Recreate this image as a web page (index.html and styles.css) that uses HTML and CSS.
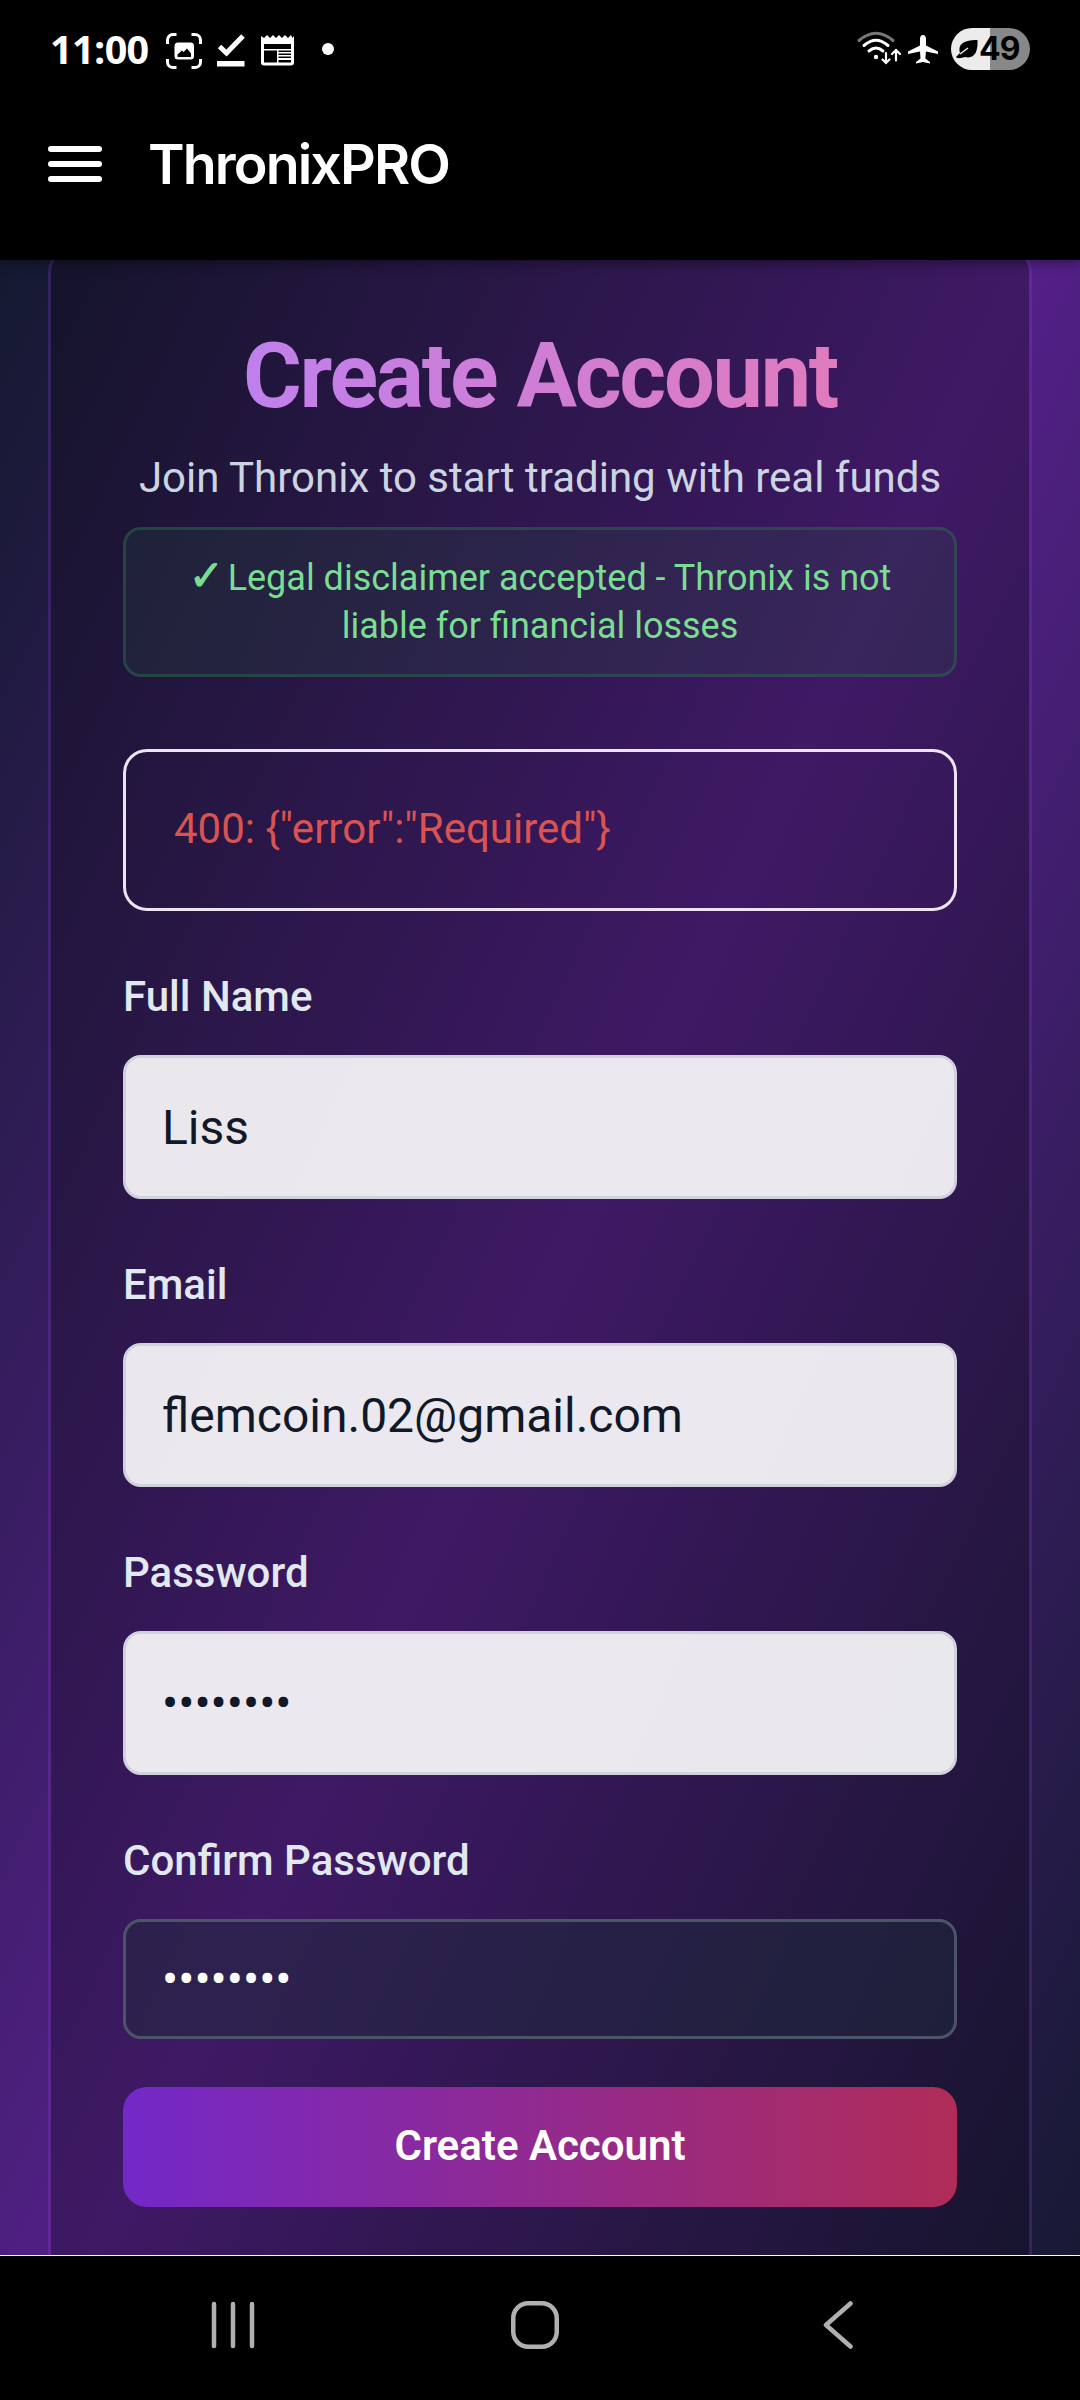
FILE: index.html
```html
<!DOCTYPE html>
<html lang="en">
<head>
<meta charset="utf-8">
<title>ThronixPRO</title>
<link rel="stylesheet" href="styles.css">
</head>
<body>
<div class="screen">
  <header class="top">
    <div class="status">
      <div class="status-left">
        <span class="clock">11:00</span>
        <svg class="st-shot" width="36" height="36" viewBox="0 0 36 36"><g fill="none" stroke="#fff" stroke-width="3"><path d="M1.500 11V7a5.500 5.500 0 0 1 5.500-5.500H10.500M25.500 1.500H29A5.500 5.500 0 0 1 34.500 7v4M34.500 26v3a5.500 5.500 0 0 1-5.500 5.500H25.500M10.500 34.500H7A5.500 5.500 0 0 1 1.500 29V26"/></g><path fill="#fff" fill-rule="evenodd" d="M12 9.500h12.500a3.500 3.500 0 0 1 3.500 3.500v10a3.500 3.500 0 0 1-3.500 3.500H12A3.500 3.500 0 0 1 8.500 23V13A3.500 3.500 0 0 1 12 9.500zM11.500 24h13.500v-3.500l-4-5-3.500 3.500-1.500-1.500-4.500 4z"/></svg>
        <svg class="st-check" width="28" height="34" viewBox="0 0 28 34"><path d="M2.500 13.500L9.500 20 26 3" fill="none" stroke="#fff" stroke-width="5"/><path d="M0 28h27.500v5.500H0z" fill="#fff"/></svg>
        <svg class="st-news" width="33" height="31" viewBox="0 0 33 31"><path fill="#fff" fill-rule="evenodd" d="M0 1l3 2 3-3 3 3 3-3 3 3 3-3 3 3 3-3 3 3 3-3 1.500 3L33 1v26.500a3 3 0 0 1-3 3H3a3 3 0 0 1-3-3zM3 9v5h27V9zM3 15.500v12h13v-12zM17.500 15.500v1.500H30v-1.500zM17.500 18.500V20H30v-1.500zM17.500 21.500V23H30v-1.500zM17.500 25v2.500H30V25z"/></svg>
        <span class="st-dot"></span>
      </div>
      <div class="status-right">
        <svg class="st-wifi" width="45" height="36" viewBox="0 0 45 36"><g fill="none" stroke="#fff" stroke-linecap="round"><path d="M2 9.500Q19 -5 36 9.500" stroke="#777" stroke-width="3"/><path d="M7 14.500Q19 4 31 14.500M12 20Q19 14 26 20" stroke-width="3"/><path d="M29 22v9.500M25.500 28.500l3.500 3.500 3.500-3.500M39 29.500v-10M35 23l4-4 4 4" stroke-width="2.200"/></g><circle cx="19" cy="26" r="2.200" fill="#fff"/></svg>
        <svg class="st-plane" width="30" height="29" viewBox="0 0 30 29"><path fill="#fff" d="M15 0c2 0 3 2 3 4v6.500l12 6V19l-12-2.500-.7 7L22 27v1.500L15 27l-7 1.500V27l4.500-3.500-.5-7L0 19v-2.500l12-6V4c0-2 1-4 3-4z"/></svg>
        <div class="battery">
          <svg width="22" height="20" viewBox="0 0 22 20"><path d="M4 14C2 6 6 1 21.500 1 22 14 18 20 9 18 5 19 2 20 0 18z"/><path d="M4 15l8-6" stroke="#ececec" stroke-width="1.500"/></svg>
          <span>49</span>
        </div>
      </div>
    </div>
    <div class="appbar">
      <div class="burger"><i></i><i></i><i></i></div>
      <div class="brand">ThronixPRO</div>
    </div>
  </header>
  <main class="view">
    <div class="backdrop">
      <section class="card">
        <div class="head">
          <h1>Create Account</h1>
          <p class="sub">Join Thronix to start trading with real funds</p>
          <div class="legal"><span class="tick">✓</span>Legal disclaimer accepted - Thronix is not liable for financial losses</div>
        </div>
        <form class="form">
          <div class="alert">400: {"error":"Required"}</div>
          <div class="field"><div class="label-row"><label>Full Name</label></div><div class="box light">Liss</div></div>
          <div class="field"><div class="label-row"><label>Email</label></div><div class="box light">flemcoin.02@gmail.com</div></div>
          <div class="field"><div class="label-row"><label>Password</label></div><div class="box light">••••••••</div></div>
          <div class="field"><div class="label-row"><label>Confirm Password</label></div><div class="box dark">••••••••</div></div>
          <button class="submit" type="button">Create Account</button>
        </form>
      </section>
    </div>
  </main>
  <nav class="nav">
    <svg class="nav-recents" width="44" height="48" viewBox="0 0 44 48"><path d="M3 3v42M22 3v42M41 3v42" stroke="#b0b0b0" stroke-width="4.500" stroke-linecap="round"/></svg>
    <svg class="nav-home" width="48" height="48" viewBox="0 0 48 48"><rect x="2.250" y="2.250" width="43.500" height="43.500" rx="15" fill="none" stroke="#b0b0b0" stroke-width="4.500"/></svg>
    <svg class="nav-back" width="30" height="48" viewBox="0 0 30 48"><path d="M27.500 2.500L3 24 27.500 45.500" fill="none" stroke="#b0b0b0" stroke-width="4.500" stroke-linecap="round" stroke-linejoin="round"/></svg>
  </nav>
</div>
</body>
</html>
```
FILE: styles.css
```css
* { box-sizing: border-box; }
body { margin: 0; background: #000; font-family: Roboto, sans-serif; }
.screen { width: 1080px; height: 2400px; display: flex; flex-direction: column; overflow: hidden; }

.top { height: 260px; flex: none; background: #000; color: #fff; box-shadow: 0 2px 12px rgba(0,0,0,.45); z-index: 1; }
.status { height: 98px; display: flex; justify-content: space-between; padding: 0 50px 0 50px; }
.status-left, .status-right { display: flex; align-items: center; }
.clock { width: 98px; font: 700 39.500px/96px "Open Sans", sans-serif; letter-spacing: -.6px; white-space: nowrap; }
.st-shot { margin: 3px 0 0 18px; }
.st-check { margin: 2px 0 0 15px; }
.st-news { margin: 3px 0 0 16px; }
.st-dot { width: 12px; height: 12px; border-radius: 50%; background: #fff; margin: 0 0 0 28px; }
.st-wifi { margin-right: 6px; }
.st-plane { margin-right: 13px; }
.battery { width: 79px; height: 42px; border-radius: 21px; background: linear-gradient(90deg, #ececec 39px, #888 39px); color: #000; display: flex; align-items: center; padding-left: 5px; font: 700 32px/42px Inter, sans-serif; letter-spacing: -1px; }
.battery span { margin-left: 1px; }
.appbar { display: flex; align-items: center; padding: 0 48px; height: 132px; }
.burger { width: 54px; display: flex; flex-direction: column; gap: 9px; }
.burger i { height: 6px; border-radius: 3px; background: #fff; }
.brand { margin-left: 46px; font: 600 55.500px/74px Inter, sans-serif; letter-spacing: -1.900px; }

.view { flex: none; height: 1995px; overflow: hidden; }
.backdrop { height: 2304px; margin-top: -102px; padding: 90px 48px 0; background: linear-gradient(to bottom right, #11192c, #542088, #11192c); }
.card { height: 2130px; border: 3px solid rgba(147,70,234,.22); border-radius: 24px; background: rgba(16,11,22,.31); background-clip: padding-box; padding: 72px; }
.head { display: flex; flex-direction: column; text-align: center; }
h1 { margin: 0; font-size: 90px; line-height: 108px; letter-spacing: -2.250px; font-weight: 700; color: transparent; background: linear-gradient(90deg, #b981f5, #e67ab4); background-clip: text; -webkit-background-clip: text; }
.sub { margin: 17px 0 0; font-size: 42px; line-height: 60px; color: #cbd5e1; }
.legal { margin-top: 19px; height: 150px; border: 3px solid rgba(46,110,85,.45); border-radius: 18px; background: rgba(34,90,60,.2); padding: 24px; font-size: 36px; line-height: 48px; color: #7bdc93; }
.tick { display: inline-block; width: 39px; text-align: left; font-family: "DejaVu Sans", sans-serif; font-size: 42px; line-height: 40px; -webkit-text-stroke: 1px #7bdc93; }
.form { margin-top: 72px; display: flex; flex-direction: column; gap: 48px; }
.alert { height: 162px; border: 3px solid #ece4f0; border-radius: 24px; padding: 47px 48px; font-size: 42px; line-height: 60px; color: #d95450; }
.label-row { font-size: 48px; line-height: 72px; height: 72px; margin-bottom: 24px; }
label { font-size: 42px; font-weight: 500; color: #e2e8f0; }
.box { border: 3px solid; border-radius: 18px; padding: 0 36px; font-size: 48px; display: flex; align-items: center; height: 120px; }
.light { height: 144px; background: rgba(255,255,255,.9); border-color: #d2d2df; color: #111827; }
.dark { background: rgba(30,41,59,.5); border-color: #4b5567; color: #fff; }
.submit { border: 0; height: 120px; border-radius: 24px; background: linear-gradient(90deg, #7328c8, #b02c58); color: #fff; font: 600 42px/60px Roboto, sans-serif; padding: 0 0 2px; }

.nav { flex: none; height: 145px; border-top: 1px solid #fff; background: #000; display: flex; padding: 45px 0 0 211px; }
.nav-home { margin-left: 256px; }
.nav-back { margin-left: 264px; }
```
